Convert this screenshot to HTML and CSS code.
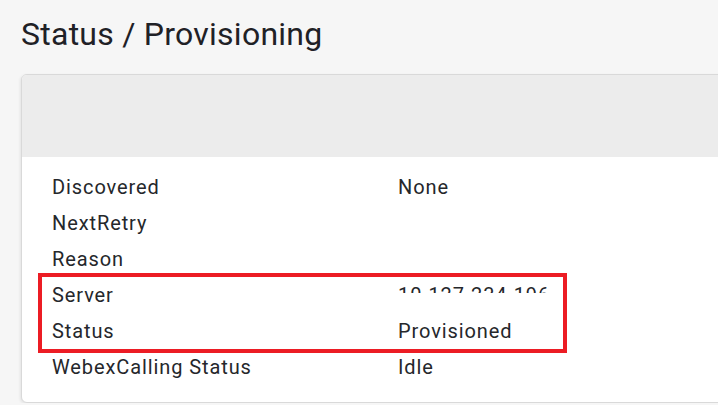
FILE: index.html
```html
<!DOCTYPE html>
<html>
<head>
<meta charset="utf-8">
<link rel="stylesheet" href="styles.css">
</head>
<body>
<h1 class="title">Status / Provisioning</h1>
<div class="card">
  <div class="card-head"></div>
  <div class="card-body">
    <div class="row"><div class="label">Discovered</div><div class="value">None</div></div>
    <div class="row"><div class="label">NextRetry</div><div class="value"></div></div>
    <div class="row"><div class="label">Reason</div><div class="value"></div></div>
    <div class="highlight">
      <div class="row"><div class="label">Server</div><div class="value"><div class="clip">10.127.234.196</div></div></div>
      <div class="row"><div class="label">Status</div><div class="value">Provisioned</div></div>
    </div>
    <div class="row"><div class="label">WebexCalling Status</div><div class="value">Idle</div></div>
  </div>
</div>
</body>
</html>
```
FILE: styles.css
```css
html, body {
  margin: 0;
  padding: 0;
  background: #f6f6f6;
  overflow: hidden;
}
body {
  font-family: Roboto, "Liberation Sans", sans-serif;
  color: #25272b;
}
.title {
  margin: 15px 0 0 21px;
  font-size: 32px;
  line-height: 38px;
  font-weight: 400;
  letter-spacing: 0.25px;
  color: #1f2126;
}
.card {
  margin: 21px 0 0 21px;
  width: 760px;
  border: 1px solid #d9d9d9;
  border-radius: 6px;
  background: #fff;
  box-shadow: -1px 1px 3px rgba(0,0,0,0.08);
  overflow: hidden;
}
.card-head {
  height: 82px;
  background: #ececec;
}
.card-body {
  padding: 12px 0 17px 30px;
}
.row {
  display: grid;
  grid-template-columns: 346px 1fr;
  height: 36px;
  line-height: 36px;
  font-size: 20px;
  letter-spacing: 0.9px;
}
.highlight {
  margin: -4px 0 -4px -14px;
  padding-left: 10px;
  width: 511px;
  border: 4px solid #ec1c24;
}
.clip {
  height: 16px;
  overflow: hidden;
}
```
